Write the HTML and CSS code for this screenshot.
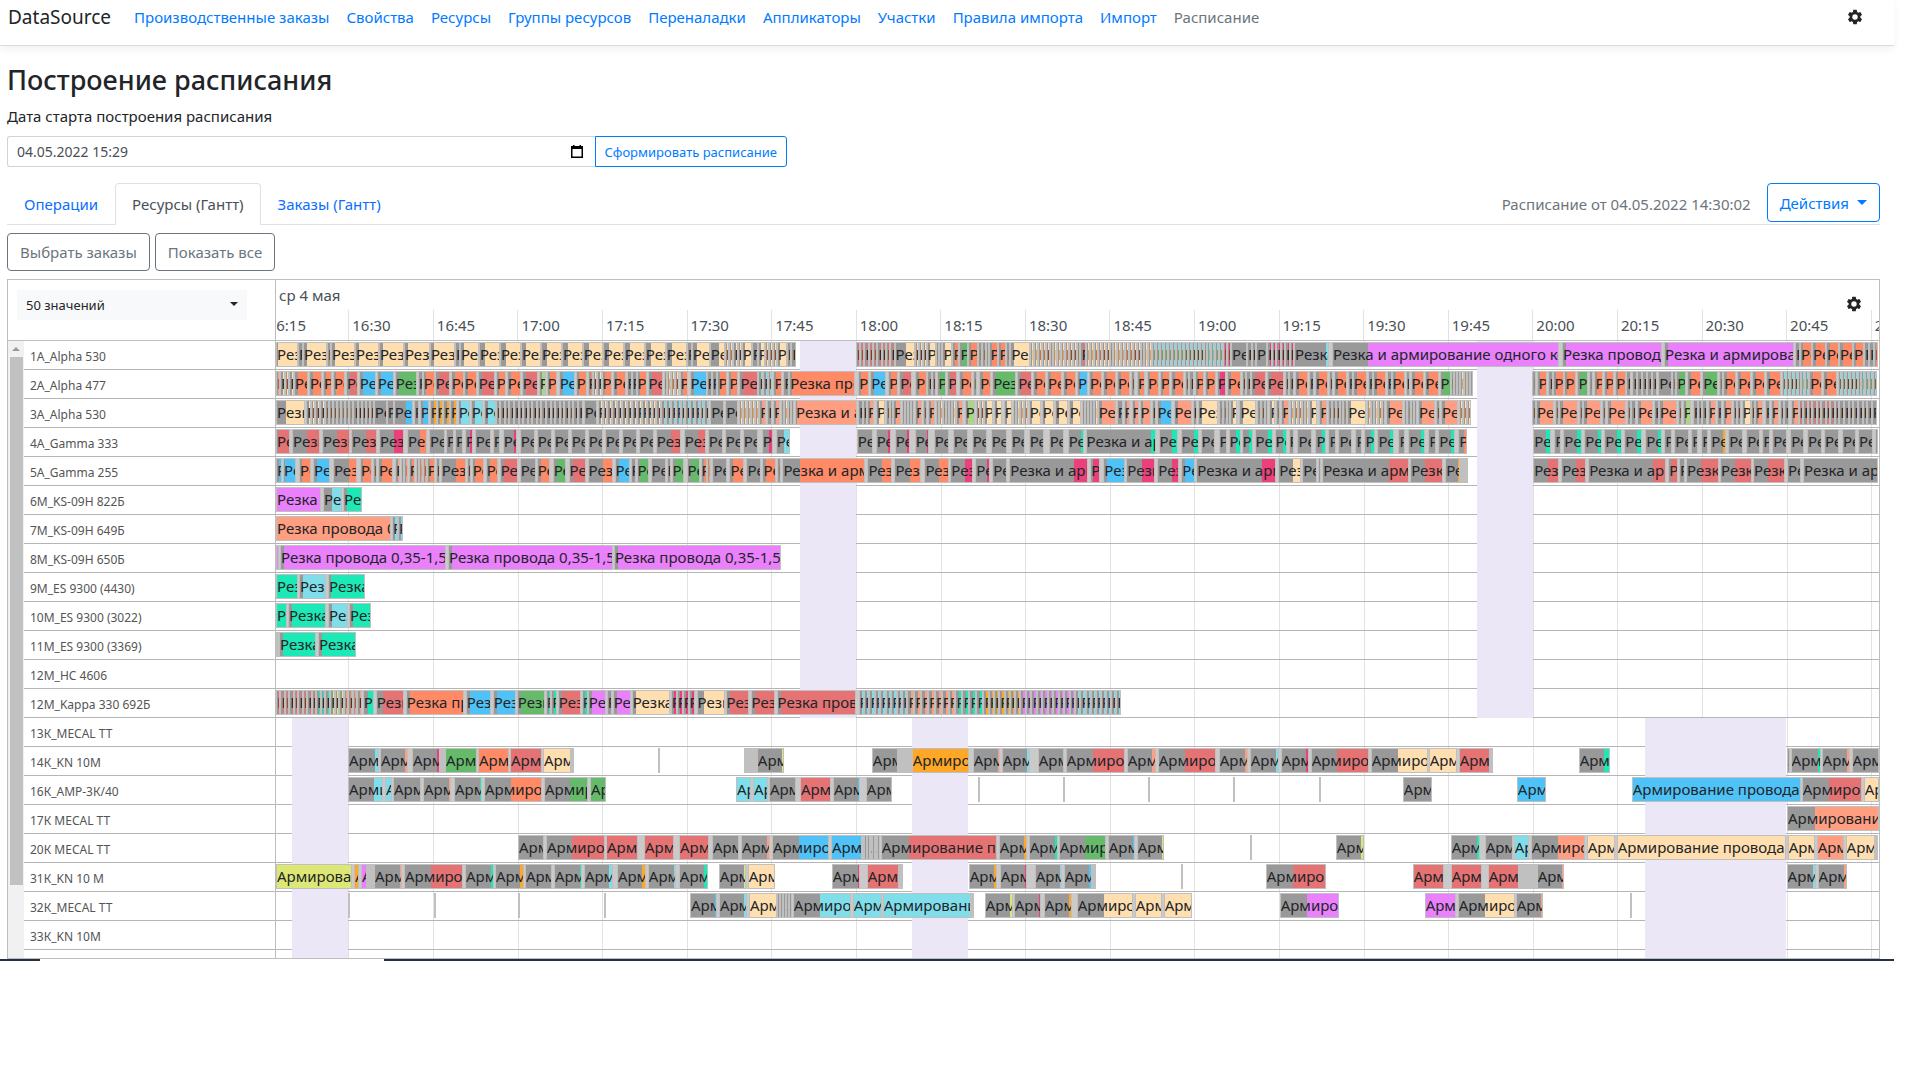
FILE: index.html
```html
<!DOCTYPE html>
<html lang="ru">
<head>
  <meta charset="UTF-8" />
  <meta name="viewport" content="width=device-width, initial-scale=1.0">
  <title>Построение расписания</title>
  <link rel="stylesheet" href="styles.css">
</head>
<body>

  <nav class="navbar">
    <a class="brand" href="#">DataSource</a>
    <a href="#">Производственные заказы</a>
    <a href="#">Свойства</a>
    <a href="#">Ресурсы</a>
    <a href="#">Группы ресурсов</a>
    <a href="#">Переналадки</a>
    <a href="#">Аппликаторы</a>
    <a href="#">Участки</a>
    <a href="#">Правила импорта</a>
    <a href="#">Импорт</a>
    <a class="current" href="#">Расписание</a>
    <button class="gear" aria-label="Настройки">
      <svg viewBox="0 0 24 24" width="18" height="18"><path d="M19.14 12.94c.04-.3.06-.61.06-.94s-.02-.64-.07-.94l2.03-1.58a.49.49 0 0 0 .12-.61l-1.92-3.32a.49.49 0 0 0-.59-.22l-2.39.96a7 7 0 0 0-1.62-.94l-.36-2.54a.48.48 0 0 0-.48-.41h-3.84a.48.48 0 0 0-.47.41l-.36 2.54c-.59.24-1.13.57-1.62.94l-2.39-.96a.48.48 0 0 0-.59.22L2.74 8.87a.48.48 0 0 0 .12.61l2.03 1.58c-.05.3-.09.63-.09.94s.02.64.07.94l-2.03 1.58a.49.49 0 0 0-.12.61l1.92 3.32c.12.22.37.29.59.22l2.39-.96c.5.38 1.03.7 1.62.94l.36 2.54c.05.24.24.41.48.41h3.84c.24 0 .44-.17.47-.41l.36-2.54a7 7 0 0 0 1.62-.94l2.39.96c.22.08.47 0 .59-.22l1.92-3.32a.48.48 0 0 0-.12-.61zM12 15.6a3.6 3.6 0 1 1 0-7.2 3.6 3.6 0 0 1 0 7.2z"/></svg>
    </button>
  </nav>

  <main>
    <h1>Построение расписания</h1>

    <label class="start-label" for="startDate">Дата старта построения расписания</label>
    <div class="start-form">
      <div class="date-box">
        <input type="text" id="startDate" value="04.05.2022 15:29">
        <svg viewBox="0 0 12 13" width="12" height="13"><path d="M2 0h1.500v1h5V0H10v1h2v12H0V1h2zM1.500 4v7.500h9V4z" fill-rule="evenodd"/></svg>
      </div>
      <button class="build">Сформировать расписание</button>
    </div>

    <div class="tabs">
      <a class="tab" href="#">Операции</a>
      <a class="tab active" href="#">Ресурсы (Гантт)</a>
      <a class="tab" href="#">Заказы (Гантт)</a>
      <span class="stamp">Расписание от 04.05.2022 14:30:02</span>
      <button class="actions">Действия <i class="caret"></i></button>
    </div>

    <div class="filters">
      <button>Выбрать заказы</button>
      <button>Показать все</button>
    </div>

    <div class="gantt">
      <div class="gantt-head">
        <div class="picker">
          <select aria-label="Ресурсы"><option>50 значений</option></select>
          <i class="caret"></i>
        </div>
        <div class="scale">
          <div class="day">
            <span>ср 4 мая</span>
            <button class="gear" aria-label="Настройки диаграммы">
              <svg viewBox="0 0 24 24" width="18" height="18"><path d="M19.14 12.94c.04-.3.06-.61.06-.94s-.02-.64-.07-.94l2.03-1.58a.49.49 0 0 0 .12-.61l-1.92-3.32a.49.49 0 0 0-.59-.22l-2.39.96a7 7 0 0 0-1.62-.94l-.36-2.54a.48.48 0 0 0-.48-.41h-3.84a.48.48 0 0 0-.47.41l-.36 2.54c-.59.24-1.13.57-1.62.94l-2.39-.96a.48.48 0 0 0-.59.22L2.74 8.87a.48.48 0 0 0 .12.61l2.03 1.58c-.05.3-.09.63-.09.94s.02.64.07.94l-2.03 1.58a.49.49 0 0 0-.12.61l1.92 3.32c.12.22.37.29.59.22l2.39-.96c.5.38 1.03.7 1.62.94l.36 2.54c.05.24.24.41.48.41h3.84c.24 0 .44-.17.47-.41l.36-2.54a7 7 0 0 0 1.62-.94l2.39.96c.22.08.47 0 .59-.22l1.92-3.32a.48.48 0 0 0-.12-.61zM12 15.6a3.6 3.6 0 1 1 0-7.2 3.6 3.6 0 0 1 0 7.2z"/></svg>
            </button>
          </div>
          <div class="hours" id="hours"></div>
        </div>
      </div>
      <div class="gantt-body">
        <div class="scrollbar"><i class="up"></i><div class="thumb"></div></div>
        <div class="rows" id="rows"></div>
      </div>
    </div>
  </main>
  <div class="taskbar"><i class="start"></i><i class="rest"></i></div>

  <script src="gantt.js"></script>
</body>
</html>
```
FILE: styles.css
```css
* {
  box-sizing: border-box;
}

body {
  margin: 0;
  padding-right: 26px;
  background: #fff;
  color: #212529;
  font-family: "Noto Sans", "Open Sans", sans-serif;
  font-size: 15px;
  line-height: 24px;
}

a {
  color: #007bff;
  text-decoration: none;
}

button,
input,
select {
  font: inherit;
}

.navbar {
  display: flex;
  align-items: center;
  gap: 17px;
  height: 46px;
  padding: 0 26px 12px 8px;
  border-bottom: 1px solid #dcdcdc;
  box-shadow: 0 4px 8px rgba(0, 0, 0, 0.05);
}

.navbar .brand {
  margin-right: 6px;
  color: #212529;
  font-size: 19px;
}

.navbar .current {
  color: #6c757d;
}

.gear {
  display: flex;
  margin-left: auto;
  padding: 4px;
  border: 0;
  background: none;
  fill: #212529;
}

main {
  padding: 17px 14px 0 7px;
}

h1 {
  margin: 0 0 7px;
  font-size: 27px;
  font-weight: 500;
  line-height: 34px;
}

.start-label {
  display: block;
  margin-bottom: 8px;
}

.start-form {
  display: flex;
  width: 780px;
  height: 31px;
  font-size: 14px;
}

.date-box {
  display: flex;
  flex: 1;
  align-items: center;
  padding: 0 12px 0 9px;
  border: 1px solid #ced4da;
  border-right: 0;
  border-radius: 3px 0 0 3px;
}

.date-box input {
  flex: 1;
  padding: 0;
  border: 0;
  outline: 0;
  color: #495057;
}

.build {
  padding: 0 9px;
  border: 1px solid #007bff;
  border-radius: 0 3px 3px 0;
  background: #fff;
  color: #007bff;
  font-size: 13px;
}

.tabs {
  display: flex;
  align-items: flex-start;
  height: 42px;
  margin-top: 16px;
  border-bottom: 1px solid #dee2e6;
}

.tab {
  height: 42px;
  padding: 8px 16px;
  border: 1px solid transparent;
  color: #0d6efd;
}

.tab.active {
  border-color: #dee2e6 #dee2e6 #fff;
  border-radius: 4px 4px 0 0;
  color: #495057;
}

.stamp {
  margin: 9px 16px 0 auto;
  color: #6c757d;
}

.caret {
  border: 5px solid transparent;
  border-top-color: currentColor;
  border-bottom: 0;
}

.actions {
  display: flex;
  align-items: center;
  gap: 8px;
  height: 39px;
  padding: 0 12px;
  border: 1px solid #007bff;
  border-radius: 4px;
  background: #fff;
  color: #007bff;
}

.filters {
  display: flex;
  gap: 5px;
  padding: 8px 0;
}

.filters button {
  height: 38px;
  padding: 0 12px;
  border: 1px solid #6c757d;
  border-radius: 4px;
  background: #fff;
  color: #6c757d;
}

/* gantt */
.gantt {
  border: 1px solid #bdbdbd;
}

.gantt-head {
  display: flex;
  height: 61px;
  border-bottom: 1px solid #bdbdbd;
}

.picker {
  display: grid;
  flex: none;
  align-items: start;
  width: 267px;
  padding: 10px 28px 0 9px;
}

.picker select,
.picker .caret {
  grid-area: 1 / 1;
}

.picker select {
  height: 30px;
  padding: 0 9px;
  border: 0;
  appearance: none;
  background: #f8f9fa;
  color: #212529;
  font-size: 13px;
}

.picker .caret {
  justify-self: end;
  margin: 12px 9px 0 0;
  border-width: 4px;
  border-bottom: 0;
}

.scale {
  display: flex;
  flex: 1;
  flex-direction: column;
  min-width: 0;
  border-left: 1px solid #bdbdbd;
  overflow: hidden;
  color: #495057;
}

.day {
  display: flex;
  align-items: flex-start;
  height: 30px;
  padding: 3px 12px 0 3px;
}

.day .gear {
  height: 0;
  margin-top: 8px;
}

.hours {
  display: flex;
  flex: 1;
  margin-left: -0.77%;
}

.hours span {
  flex: none;
  width: 5.236%;
  padding: 3px 0 0 3px;
  border-left: 1px solid #e2e2e2;
}

.gantt-body {
  display: flex;
  height: 617px;
  overflow: hidden;
}

.scrollbar {
  display: flex;
  flex: none;
  flex-direction: column;
  align-items: center;
  width: 16px;
  background: #f1f1f1;
}

.scrollbar .up {
  margin: 6px 0;
  border: 4px solid transparent;
  border-top: 0;
  border-bottom-color: #9a9a9a;
}

.scrollbar .thumb {
  width: 13px;
  height: 528px;
  background: #c1c1c1;
}

.rows {
  flex: 1;
  min-width: 0;
}

.row {
  display: flex;
  height: 29px;
}

.name {
  flex: none;
  width: 251px;
  padding: 4px 6px 0;
  border-bottom: 1px solid #b5b5b5;
  color: #555;
  font-size: 12px;
}

.lane {
  --line: linear-gradient(#b5b5b5, #b5b5b5) 0 100% / 100% 1px no-repeat;
  --grid: repeating-linear-gradient(to right, transparent 0 4.51%, #e2e2e2 4.51% calc(4.51% + 1px), transparent calc(4.51% + 1px) 5.278%);
  display: flex;
  flex: 1;
  min-width: 0;
  padding: 1px 0 3px;
  border-left: 1px solid #bdbdbd;
  overflow: hidden;
}

/* breaks of the two shops */
.lane.cut {
  background: linear-gradient(to right, transparent 32.7%, #ece7f6 32.7% 36.2%, transparent 36.2% 74.9%, #ece7f6 74.9% 78.4%, transparent 78.4%), var(--line), var(--grid);
}

.lane.crimp {
  background: linear-gradient(to right, transparent 1%, #ece7f6 1% 4.5%, transparent 4.5% 39.7%, #ece7f6 39.7% 43.2%, transparent 43.2% 85.4%, #ece7f6 85.4% 94.2%, transparent 94.2%), var(--line), var(--grid);
}

.gap {
  flex: none;
}

.gap.slack {
  background: #cacaca;
}

.task {
  --run: #999;
  flex: none;
  height: 25px;
  border: 1px solid #c0c0c0;
  background: linear-gradient(to right, #999 var(--setup), var(--run) var(--setup));
  overflow: hidden;
  line-height: 23px;
  white-space: nowrap;
}

.c-y { --run: #ffdfb0; }
.c-o { --run: #ff8a65; }
.c-s { --run: #ff9e80; }
.c-r { --run: #e57373; }
.c-b { --run: #4fc3f7; }
.c-g { --run: #66bb6a; }
.c-l { --run: #aed581; }
.c-c { --run: #80deea; }
.c-t { --run: #1de9b6; }
.c-p { --run: #ec407a; }
.c-v { --run: #ea80fc; }
.c-a { --run: #ffa726; }
.c-i { --run: #dce775; }

.task.idle {
  background: #c0c0c0;
}

.taskbar {
  display: flex;
  height: 2px;
}

.taskbar i {
  background: #22303f;
}

.taskbar .start {
  width: 40px;
}

.taskbar .rest {
  flex: 1;
  margin-left: 344px;
}
```
FILE: gantt.js
```js
const SPAN = 1603; // length of the visible timeline
const CUT = "Резка провода 0,35-1,5";
const CUT_CRIMP = "Резка и армирование одного конца";
const CRIMP = "Армирование провода";

// "start-end", xN = split into N short tasks, colour letter, setup time,
// "!" = cut and crimp. "k" is idle time.
const rows = [
  ["1A_Alpha 530", "cut", "0-22y1 22-27x1n 27-51y 51-55x1n 55-79y 79-103y 103-128y 128-154y 154-179y 179-184x1n 184-203y 203-224y5 224-245y5 245-265y5 265-286y5 286-307y5 307-327y5 327-348y5 348-369y5 369-390y5 390-411y5 411-416x1n 416-434y5 434-449y9 449-466x4y 466-476y 476-482x1n 482-489y 489-501x3y 501-511y 511-520x2n 580-619x9r 619-639y11 639-651x3y 651-660y 660-667x2y 667-677y 677-684o 684-693g 693-703o 703-714x3n 714-723o 723-731o 731-735x1n 735-755y3 755-805x13y 805-811r 811-877x17y 877-901x6c 901-948x12c 948-956x2p 956-972n 972-981x2n 981-992n 992-1019x6p 1019-1054c33! 1057-1284v35! 1287-1387v3 1389-1519v! 1520-1525x1n 1525-1537o 1537-1551o 1551-1564o 1564-1578o 1578-1589o 1589-1599x2n 1599-1603o"],
  ["2A_Alpha 477", "cut", "0-4s 4-18x3y 18-32o 33-46o 47-56o 57-69o 70-82r 83-100b 101-118b 119-141g 142-147x1n 147-159o 159-174r 175-188o 188-201o 202-219r 220-230o 231-245o 246-262r 263-270l 271-281o 283-299b 300-311o 312-317o 317-326x2y 326-336o 337-350o 351-361x2n 361-371o 372-387r 388-403x4y 404-412o 414-431b 431-441x2n 442-452o 453-463o 464-483r 483-497x3c 498-507o 508-514x1n 514-580o2 583-594o 595-611b 613-623o 624-637r 640-652o 652-661x2n 662-671g 672-682r 684-697o 698-702x1n 704-716o 717-741g 742-757r 758-771o 772-787o 788-801o 802-813b 814-827o 828-841o 842-855o 856-860x1n 862-870o 872-884o 885-895o 896-909o 910-919x2n 920-929o 930-941o 942-951p 952-966o 967-976x2n 976-991r 992-1009r 1010-1019x2n 1020-1033o 1034-1039x1n 1040-1053o 1054-1058x1n 1059-1072o 1073-1078x1n 1078-1092o 1093-1098x1n 1098-1111o 1112-1117x1n 1117-1130o 1131-1135x1n 1136-1149o 1150-1164o 1165-1176g 1176-1199x7y 1258-1262x1n 1263-1273o 1274-1279x1n 1279-1290o 1290-1302o 1303-1314g 1315-1319x1n 1320-1329o 1330-1340o 1341-1352o 1352-1357x1n 1358-1383x5n 1384-1398n 1398-1402x1n 1402-1412g 1413-1427o 1428-1444g 1445-1449x1n 1449-1462o 1463-1477o 1478-1491o 1492-1507o 1508-1535x7c 1535-1548o 1549-1563o 1564-1603x10c"],
  ["3A_Alpha 530", "cut", "0-29y10 30-49x4y 49-98x12n 98-111n 111-118x1n 118-137b12 138-143x1n 144-153b 154-181x4a 182-194c 195-207c 208-220c 220-307x19n 308-321n 322-386x13y 386-434x10c 435-449n 450-463n 464-484x5y 484-491s 492-497x1n 498-505s 506-519x4y 520-582s1! 583-592x2n 592-599s 601-610y 611-618x2n 618-626s 627-639x4y 640-647s 648-652x1n 653-660s 661-681x6y 681-688s 690-700l 701-709x2y 709-718y 719-727y 729-737y 738-753x4y 754-766y 767-779y 780-793y 794-806y 807-823x5y 823-841s 842-848x1n 849-855s 857-864s 865-876s 877-881x1n 882-897b 899-917s 918-922x1n 923-944y 945-956x3n 956-963y 965-982y 983-994x3n 995-1001y 1002-1006x1n 1007-1015s 1016-1035x5y 1035-1043y 1045-1053s 1054-1073x5n 1073-1092y 1093-1111x5y 1112-1129s 1130-1143x4n 1144-1161s 1162-1166x1n 1167-1184s 1185-1197x3y 1258-1262x1n 1262-1280s 1281-1285x1n 1285-1304s 1305-1309x1n 1309-1327s 1328-1332x1n 1333-1352s 1353-1362x2n 1363-1379s 1380-1385x1n 1385-1403s 1404-1408x1n 1409-1417l 1419-1433x3n 1434-1442s 1443-1448x1n 1449-1458s 1459-1467x2n 1468-1477y 1477-1481x1n 1481-1489s 1491-1496x1n 1497-1505s 1506-1515x2n 1517-1525s 1525-1561x8r 1561-1603x9n"],
  ["4A_Gamma 333", "cut", "0-14r1 16-44r15 46-74r15 75-101r15 103-128p15 131-151o13 153-169n 170-178n 179-187n 189-197p5 199-215n 217-224n 227-241p12 244-259n 261-276n 278-293n 295-310n 312-327n 329-344n 346-361n 363-378n 380-405r15 408-430r14 432-447n 449-465n 467-482n 486-497p7 500-514c8 581-597n 600-615p13 619-634p13 639-653p13 658-673n 677-692n 696-711n 715-731n 735-749n 753-768n 773-788n 792-808t14 810-880t66! 883-902t13 905-923t14 925-939n 943-951n 953-965t7 966-977t7 979-997t14 999-1011t8 1013-1019n 1022-1037n 1040-1051t7 1053-1061n 1063-1077n 1080-1087n 1089-1100t7 1102-1119t14 1123-1130n 1133-1150t14 1153-1161n 1163-1180t14 1183-1192o7 1258-1276t14 1279-1286n 1288-1307t15 1309-1327t15 1329-1347t14 1349-1367t14 1370-1387t14 1389-1397n 1399-1414n 1416-1423n 1426-1433n 1435-1451a14 1453-1468n 1471-1485n 1487-1495n 1497-1512n 1515-1529n 1532-1547n 1549-1564n 1567-1581n 1583-1598n 1600-1603n"],
  ["5A_Gamma 255", "cut", "0-6b 7-20b1 23-35o 37-54b 57-81o16 84-96o 97-101x1n 102-117o 119-124s 125-132x2s 133-139o 140-151x3s 151-159o 160-164x1n 165-190o15 191-195x1n 196-208o 210-222o 224-242r 244-260n 261-274o 277-290g 293-310r 312-337o15 339-354b 355-360x1n 361-373g 375-390n 391-395x1n 396-408g 411-424g 425-431o 432-436x1s 437-452n 454-469o 471-486n 487-501o 502-506x1n 507-590o17! 592-617o15 619-646o16 649-674o15 675-698p15 700-715p13 717-732n 734-813p66! 815-825p 828-850b3 851-880p16 882-904p15 906-920b 921-1001p67! 1003-1026y15 1027-1042n 1043-1046x1n 1047-1134r68! 1135-1168r15 1170-1185a14 1185-1193k 1258-1284r15 1286-1311r15 1313-1391r66! 1393-1403r 1404-1410x1n 1411-1444r15 1445-1477r15 1478-1510r15 1512-1526n 1528-1603n!"],
  ["6M_KS-09H 822Б", "cut", "0-45v0 47-66c9 67-86t"],
  ["7M_KS-09H 649Б", "cut", "0-115s0 116-122c 122-127c"],
  ["8M_KS-09H 650Б", "cut", "0-3v0 4-170v 172-337v 338-505v"],
  ["9M_ES 9300 (4430)", "cut", "0-22t0 23-50c 52-89t2"],
  ["10M_ES 9300 (3022)", "cut", "0-11t0 12-50t 52-72c 73-95t"],
  ["11M_ES 9300 (3369)", "cut", "0-3k 3-40t 42-80t"],
  ["12M_HC 4606", "cut", ""],
  ["12M_Kappa 330 692Б", "cut", "0-40x9r 40-54x3t 54-68x3i 68-86x4s 87-98t5 100-128r6 130-188o 190-215b 217-240b 241-269g 270-281x2t 282-305r 306-312x1t 312-330v 331-336x1n 337-355v 356-394y 395-419x4p 421-449y6 450-473r 475-499r 501-580r 583-632x9c 632-680x7s 680-708x4t 708-745x7a 745-800x10v 800-846x9c"],
  ["13К_MECAL TT", "crimp", ""],
  ["14К_KN 10М", "crimp", "72-103c28 104-132s26 136-164p26 164-169k 169-201g0 202-233o0 234-266r0 267-295y0 295-298k 382-384k 468-481x4k 481-508i26 596-622n 622-636x4k 636-693a0 697-724s26 726-754c26 762-788n 790-849r27 851-880s26 882-940r27 943-972s27 974-1003c27 1005-1033p26 1035-1093r26 1095-1152y27 1153-1181y0 1183-1214r0 1214-1217k 1303-1334t26 1511-1514t 1515-1545t28 1546-1574s26 1576-1603n"],
  ["16К_АМР-3К/40", "crimp", "72-107c26 109-116c0 117-145n 147-175s27 178-206t27 208-266o27 268-312g26 314-330g0 460-475c0 477-492c0 493-520n 524-555r0 557-584b26 590-616n 702-704k 787-789k 872-874k 957-959k 1043-1045k 1127-1156n 1241-1270b0 1356-1525b0 1526-1586r27 1588-1603y0"],
  ["17К MECAL TT", "crimp", "1511-1603s28"],
  ["20К MECAL TT", "crimp", "242-268n 270-329r26 330-362r0 368-398r0 403-433r0 436-463n 465-494s27 496-553b27 555-586b0 586-604x7y 605-721r27 723-751a26 753-782t27 783-830g26 832-859b26 861-888i26 974-976k 1060-1088i26 1175-1204t27 1209-1237n 1238-1253c0 1255-1309s27 1311-1339y0 1341-1510y0 1512-1539y0 1541-1568s0 1570-1599y0 1599-1602k"],
  ["31К_KN 10 М", "crimp", "0-76i0 78-83a0 85-91v0 91-98k 98-126s27 128-187r27 189-218t27 219-248a26 249-276n 278-306t27 308-337c26 341-370a26 372-400c27 403-432t26 443-470i26 472-499y0 556-584p27 591-623r0 623-627k 693-721a26 724-751p26 759-786c26 788-816b26 816-820k 905-907k 990-1050r27 1137-1168r0 1175-1206r0 1212-1243r0 1243-1261x5k 1261-1288s26 1511-1540c27 1542-1571s27"],
  ["32К_MECAL TT", "crimp", "72-74k 158-160k 242-244k 328-330k 414-441b26 443-471c26 473-501y0 501-516x5y 517-575c27 577-606c0 607-695c0 695-698k 709-737i26 738-765p26 768-796a26 801-857y27 859-886y0 888-916y0 1004-1063v27 1149-1180v0 1182-1239y27 1240-1267s26 1354-1356k"],
  ["33К_KN 10М", "crimp", ""],
  ["", "crimp", ""]
];

const pct = (n, of) => (100 * n / of).toFixed(3) + "%";

function fitLabel(label, width) {
  if (width < 5) {
    return label === CRIMP ? "." : label[0];
  }
  return label.slice(0, Math.ceil(width / 8) + (width > 55 && width !== 115 ? 1 : 0));
}

function taskHtml(width, color, setup, label) {
  if (color === "k") {
    return `<div class="task idle" style="width:${pct(width, SPAN)}"></div>`;
  }
  return `<div class="task c-${color}" style="width:${pct(width, SPAN)};--setup:${pct(setup, width)}">${fitLabel(label, width)}</div>`;
}

function laneHtml(kind, tasks) {
  let html = "";
  let pos = 0;
  for (const [, s, e, count, color, setup, both] of tasks.matchAll(/(\d+)-(\d+)(?:x(\d+))?([a-z])(\d*)(!?)/g)) {
    const gap = s - pos;
    if (gap > 0) {
      html += `<i class="gap${pos > 0 && gap < 10 ? " slack" : ""}" style="width:${pct(gap, SPAN)}"></i>`;
    }
    const n = Number(count || 1);
    const width = (e - s) / n;
    const lead = count ? width * 0.6 : Number(setup || 3);
    const label = kind === "crimp" ? CRIMP : both ? CUT_CRIMP : CUT;
    html += taskHtml(width, color, lead, label).repeat(n);
    pos = Number(e);
  }
  return html;
}

document.getElementById("rows").innerHTML = rows.map(([name, kind, tasks]) =>
  `<div class="row"><div class="name">${name}</div><div class="lane ${kind}">${laneHtml(kind, tasks)}</div></div>`
).join("");

let hours = "";
for (let m = 16 * 60 + 15; m <= 21 * 60; m += 15) {
  hours += `<span>${Math.floor(m / 60)}:${String(m % 60).padStart(2, "0")}</span>`;
}
document.getElementById("hours").innerHTML = hours;
```
